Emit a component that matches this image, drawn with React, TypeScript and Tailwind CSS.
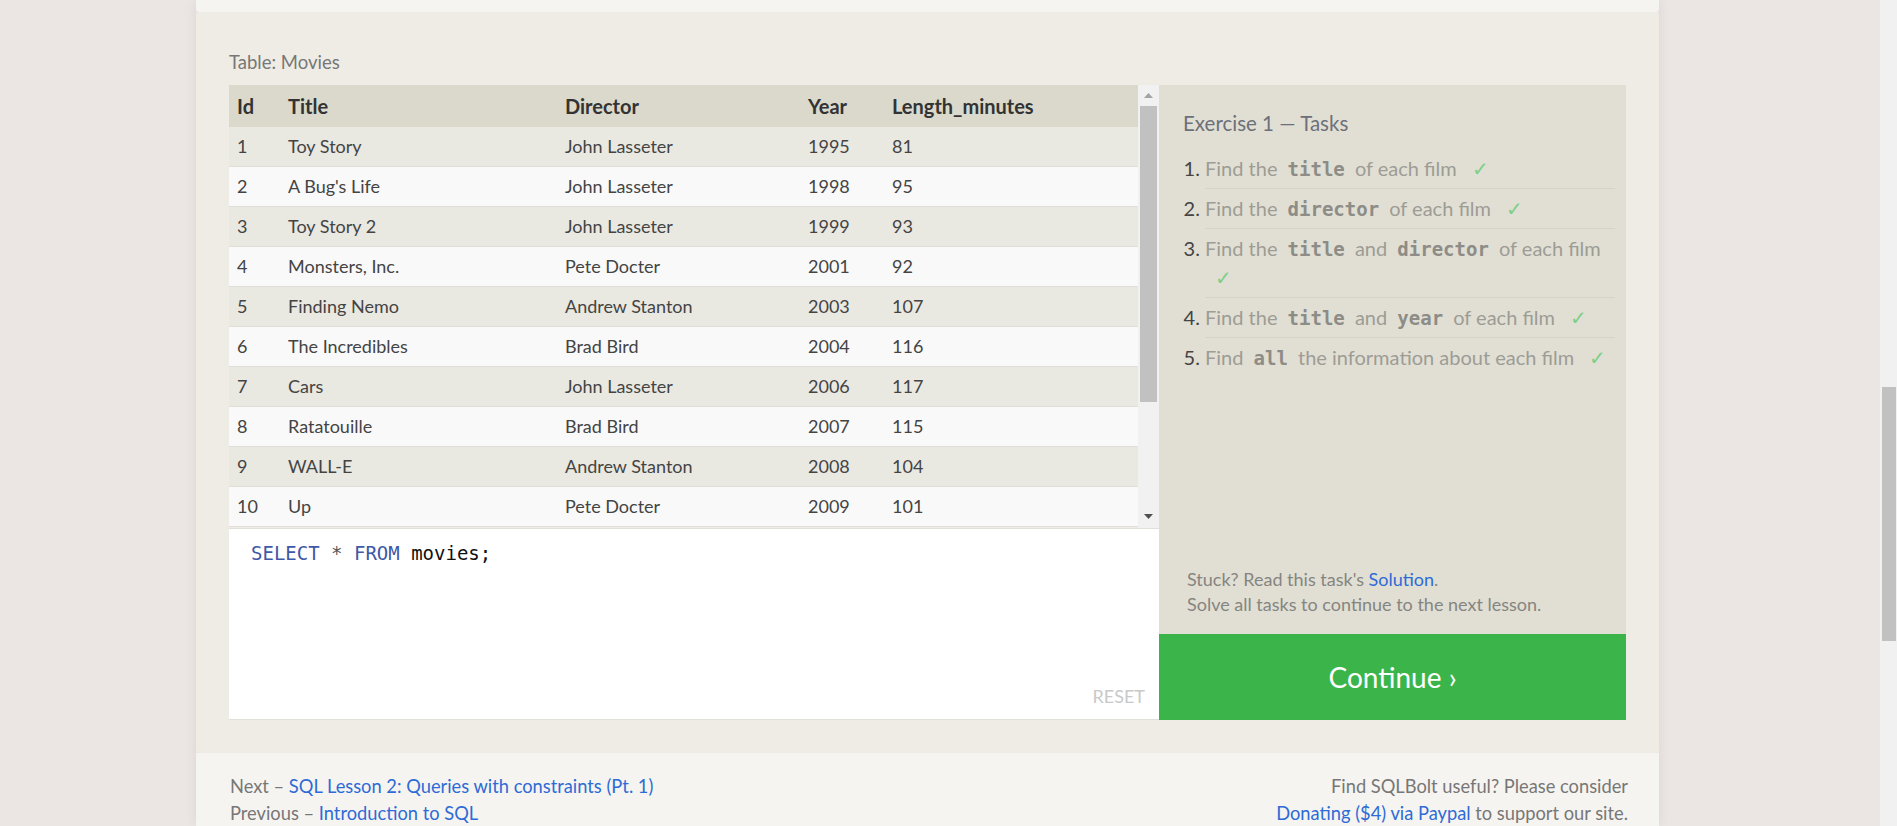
import React from "react";

const movies = [
  { id: 1, title: "Toy Story", director: "John Lasseter", year: 1995, length: 81 },
  { id: 2, title: "A Bug's Life", director: "John Lasseter", year: 1998, length: 95 },
  { id: 3, title: "Toy Story 2", director: "John Lasseter", year: 1999, length: 93 },
  { id: 4, title: "Monsters, Inc.", director: "Pete Docter", year: 2001, length: 92 },
  { id: 5, title: "Finding Nemo", director: "Andrew Stanton", year: 2003, length: 107 },
  { id: 6, title: "The Incredibles", director: "Brad Bird", year: 2004, length: 116 },
  { id: 7, title: "Cars", director: "John Lasseter", year: 2006, length: 117 },
  { id: 8, title: "Ratatouille", director: "Brad Bird", year: 2007, length: 115 },
  { id: 9, title: "WALL-E", director: "Andrew Stanton", year: 2008, length: 104 },
  { id: 10, title: "Up", director: "Pete Docter", year: 2009, length: 101 },
];

const Code: React.FC<{ children: React.ReactNode }> = ({ children }) => (
  <code className="px-[5px] font-['DejaVu_Sans_Mono',monospace] text-[19px] leading-[19px] font-bold text-[#8d8c86]">{children}</code>
);

const Check = () => <span className="ml-[10px] text-[#7fcf88]">✓</span>;

const App: React.FC = () => {
  return (
    <div className="flex h-[826px] w-full overflow-hidden bg-[#ebe6e3] font-['Lato',sans-serif]">
      <div className="flex flex-1 pl-[196px]">
        <div className="flex w-[1463px] flex-col shadow-[0_0_12px_rgba(0,0,0,0.07)]">
          {/* bottom of previous section */}
          <div className="h-[12px] shrink-0 rounded-b-[4px] bg-[#f6f4f0]" />

          {/* exercise card */}
          <div className="shrink-0 rounded-[4px] bg-[#efece5] px-[33px] pb-[33px] pt-[38px]">
            <div className="mb-[11px] text-[18.5px] leading-[24px] text-[#777]">Table: Movies</div>
            <div className="flex">
              {/* table + editor */}
              <div className="flex w-[930px] flex-col">
                <div className="flex h-[443px]">
                  <div className="w-[909px] overflow-hidden">
                    <div className="grid h-[42px] grid-cols-[51px_277px_243px_84px_1fr] items-center bg-[#dad9cc] text-[20px] font-bold text-[#333]">
                      <div className="pl-2">Id</div>
                      <div className="pl-2">Title</div>
                      <div className="pl-2">Director</div>
                      <div className="pl-2">Year</div>
                      <div className="pl-2">Length_minutes</div>
                    </div>
                    {movies.map((m) => (
                      <div
                        key={m.id}
                        className={`grid h-[40px] grid-cols-[51px_277px_243px_84px_1fr] items-center border-b border-[#e0dfd9] text-[18px] text-[#444] ${m.id % 2 ? "bg-[#e9e8e1]" : "bg-[#f9f9f9]"}`}
                      >
                        <div className="pl-2">{m.id}</div>
                        <div className="pl-2">{m.title}</div>
                        <div className="pl-2">{m.director}</div>
                        <div className="pl-2">{m.year}</div>
                        <div className="pl-2">{m.length}</div>
                      </div>
                    ))}
                  </div>
                  {/* table scrollbar */}
                  <div className="flex w-[21px] flex-col bg-[#f1f1f1]">
                    <div className="flex h-[21px] items-center justify-center">
                      <svg width="9" height="5" viewBox="0 0 9 5">
                        <polygon points="4.5,0 9,5 0,5" fill="#a3a3a3" />
                      </svg>
                    </div>
                    <div className="mx-[2px] h-[296px] bg-[#c1c1c1]" />
                    <div className="flex flex-1 items-end justify-center pb-[9px]">
                      <svg width="9" height="5" viewBox="0 0 9 5">
                        <polygon points="0,0 9,0 4.5,5" fill="#505050" />
                      </svg>
                    </div>
                  </div>
                </div>
                <div className="flex h-[192px] flex-col border-b border-t border-[#e0dfd9] bg-white pl-[22px] pr-[14px] pt-[12px] pb-[11px]">
                  <div className="font-['DejaVu_Sans_Mono',monospace] text-[19px] leading-[24px]">
                    <span className="text-[#4058a6]">SELECT</span>
                    <span className="text-[#555]"> * </span>
                    <span className="text-[#4058a6]">FROM</span>
                    <span className="text-[#111]"> movies;</span>
                  </div>
                  <div className="mt-auto self-end text-[18px] leading-[24px] text-[#c9c9c9]">RESET</div>
                </div>
              </div>

              {/* tasks panel */}
              <div className="flex flex-1 flex-col">
                <div className="flex h-[549px] flex-col bg-[#e1dfd4] pt-[24px]">
                  <div className="pl-[24px] text-[20.5px] leading-[28px] text-[#6c707a]">Exercise 1 — Tasks</div>
                  <ol className="mt-[12px] list-decimal pl-[46px] pr-[11px] text-[20px] leading-[29px] text-[#9d9c95] marker:text-[#444]">
                    <li className="border-b border-[#d6d4c9] py-[5px]">
                      Find the <Code>title</Code> of each film <Check />
                    </li>
                    <li className="border-b border-[#d6d4c9] py-[5px]">
                      Find the <Code>director</Code> of each film <Check />
                    </li>
                    <li className="border-b border-[#d6d4c9] py-[5px]">
                      Find the <Code>title</Code> and <Code>director</Code> of each film <Check />
                    </li>
                    <li className="border-b border-[#d6d4c9] py-[5px]">
                      Find the <Code>title</Code> and <Code>year</Code> of each film <Check />
                    </li>
                    <li className="py-[5px]">
                      Find <Code>all</Code> the information about each film <Check />
                    </li>
                  </ol>
                  <div className="mt-auto pb-[17px] pl-[28px] text-[18px] leading-[25px] text-[#858580]">
                    <div>
                      Stuck? Read this task's <span className="text-[#2d6bd6]">Solution</span>.
                    </div>
                    <div>Solve all tasks to continue to the next lesson.</div>
                  </div>
                </div>
                <div className="flex h-[86px] items-center justify-center bg-[#3bb54a] text-[28px] text-white">
                  Continue ›
                </div>
              </div>
            </div>
          </div>

          {/* footer */}
          <div className="flex flex-1 justify-between bg-[#f6f4f0] pl-[34px] pr-[31px] pt-[20px] text-[18.3px] leading-[27px] text-[#777]">
            <div>
              <div>
                Next – <span className="text-[#2d6bd6]">SQL Lesson 2: Queries with constraints (Pt. 1)</span>
              </div>
              <div>
                Previous – <span className="text-[#2d6bd6]">Introduction to SQL</span>
              </div>
            </div>
            <div className="text-right">
              <div>Find SQLBolt useful? Please consider</div>
              <div>
                <span className="text-[#2d6bd6]">Donating ($4) via Paypal</span> to support our site.
              </div>
            </div>
          </div>
        </div>
      </div>

      {/* page scrollbar */}
      <div className="flex w-[17px] flex-col bg-[#f1f1f1] pt-[387px]">
        <div className="ml-[2px] mr-px h-[254px] bg-[#c1c1c1]" />
      </div>
    </div>
  );
};

export default App;
